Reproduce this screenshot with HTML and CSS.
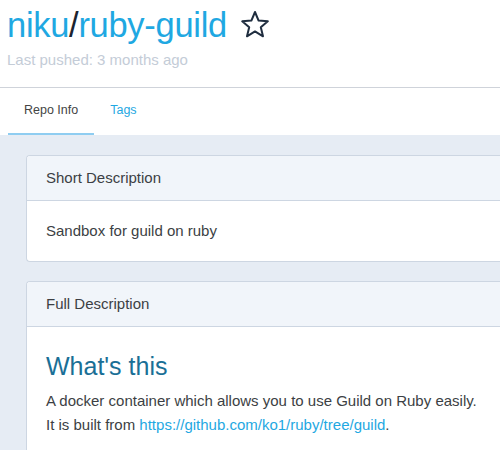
FILE: index.html
```html
<!DOCTYPE html>
<html>
<head>
<meta charset="utf-8">
<link rel="stylesheet" href="styles.css">
</head>
<body>
<header class="repo-header">
  <div class="title-row">
    <h1 class="title"><span class="ns">niku</span><span class="slash">/</span><span class="name">ruby-guild</span></h1>
    <svg class="star" width="30" height="28" viewBox="0 0 30 28">
      <polygon points="15,2 18.6,10.6 27.8,11.3 20.8,17.3 23,26.3 15,21.4 7,26.3 9.2,17.3 2.2,11.3 11.4,10.6" fill="none" stroke="#1f2d3f" stroke-width="2" stroke-linejoin="round"/>
    </svg>
  </div>
  <div class="pushed">Last pushed: 3 months ago</div>
</header>
<nav class="tabs">
  <div class="tab active">Repo Info</div>
  <div class="tab">Tags</div>
</nav>
<main class="content">
  <section class="card">
    <div class="card-head">Short Description</div>
    <div class="card-body short">Sandbox for guild on ruby</div>
  </section>
  <section class="card">
    <div class="card-head">Full Description</div>
    <div class="card-body full">
      <h2 class="md-h">What's this</h2>
      <p class="md-p">A docker container which allows you to use Guild on Ruby easily.<br>It is built from <a href="#">https://github.com/ko1/ruby/tree/guild</a>.</p>
    </div>
  </section>
</main>
</body>
</html>
```
FILE: styles.css
```css
html, body {
  margin: 0;
  padding: 0;
  background: #fff;
  font-family: "Liberation Sans", Arial, sans-serif;
  width: 500px;
  height: 450px;
  overflow: hidden;
}
.repo-header {
  padding: 4px 0 0 7px;
  height: 88px;
  border-bottom: 1px solid #cfd3da;
  box-sizing: border-box;
}
.title-row {
  display: flex;
  align-items: center;
  gap: 13px;
  height: 42px;
}
.title {
  margin: 0;
  font-weight: normal;
  font-size: 34.5px;
  line-height: 42px;
  letter-spacing: -0.3px;
}
.ns, .name { color: #1fa8e2; }
.slash { color: #1b2430; }
.star { display: block; margin-top: -2px; }
.pushed {
  margin-top: 4px;
  font-size: 15px;
  line-height: 20px;
  color: #c4ccd7;
}
.tabs {
  display: flex;
  padding-left: 8px;
  height: 47px;
  box-sizing: border-box;
}
.tab {
  font-size: 12.5px;
  line-height: 45px;
  padding: 0 16px;
  color: #1fa8e2;
  white-space: nowrap;
}
.tab.active {
  color: #444;
  border-bottom: 2px solid #8fcdf1;
}
.content {
  background: #e6ecf4;
  padding: 20px 0 0 26px;
  height: 315px;
  overflow: hidden;
}
.card {
  background: #fff;
  border: 1px solid #cdd6e2;
  border-right: none;
  border-radius: 4px 0 0 4px;
  margin-bottom: 19px;
  overflow: hidden;
}
.card-head {
  background: #f1f5fa;
  border-bottom: 1px solid #cdd6e2;
  height: 44px;
  line-height: 44px;
  padding-left: 19px;
  font-size: 15px;
  color: #3c3f44;
}
.card-body {
  padding-left: 19px;
  color: #3c3f44;
  font-size: 15px;
}
.card-body.short {
  height: 60px;
  line-height: 60px;
}
.card-body.full {
  padding-top: 24px;
  padding-bottom: 20px;
  white-space: nowrap;
}
.md-h {
  margin: 0;
  font-weight: normal;
  font-size: 25px;
  line-height: 30px;
  color: #1a6f96;
}
.md-p {
  margin: 8px 0 0;
  line-height: 24px;
}
.md-p a {
  color: #1fa8e2;
  text-decoration: none;
}
```
